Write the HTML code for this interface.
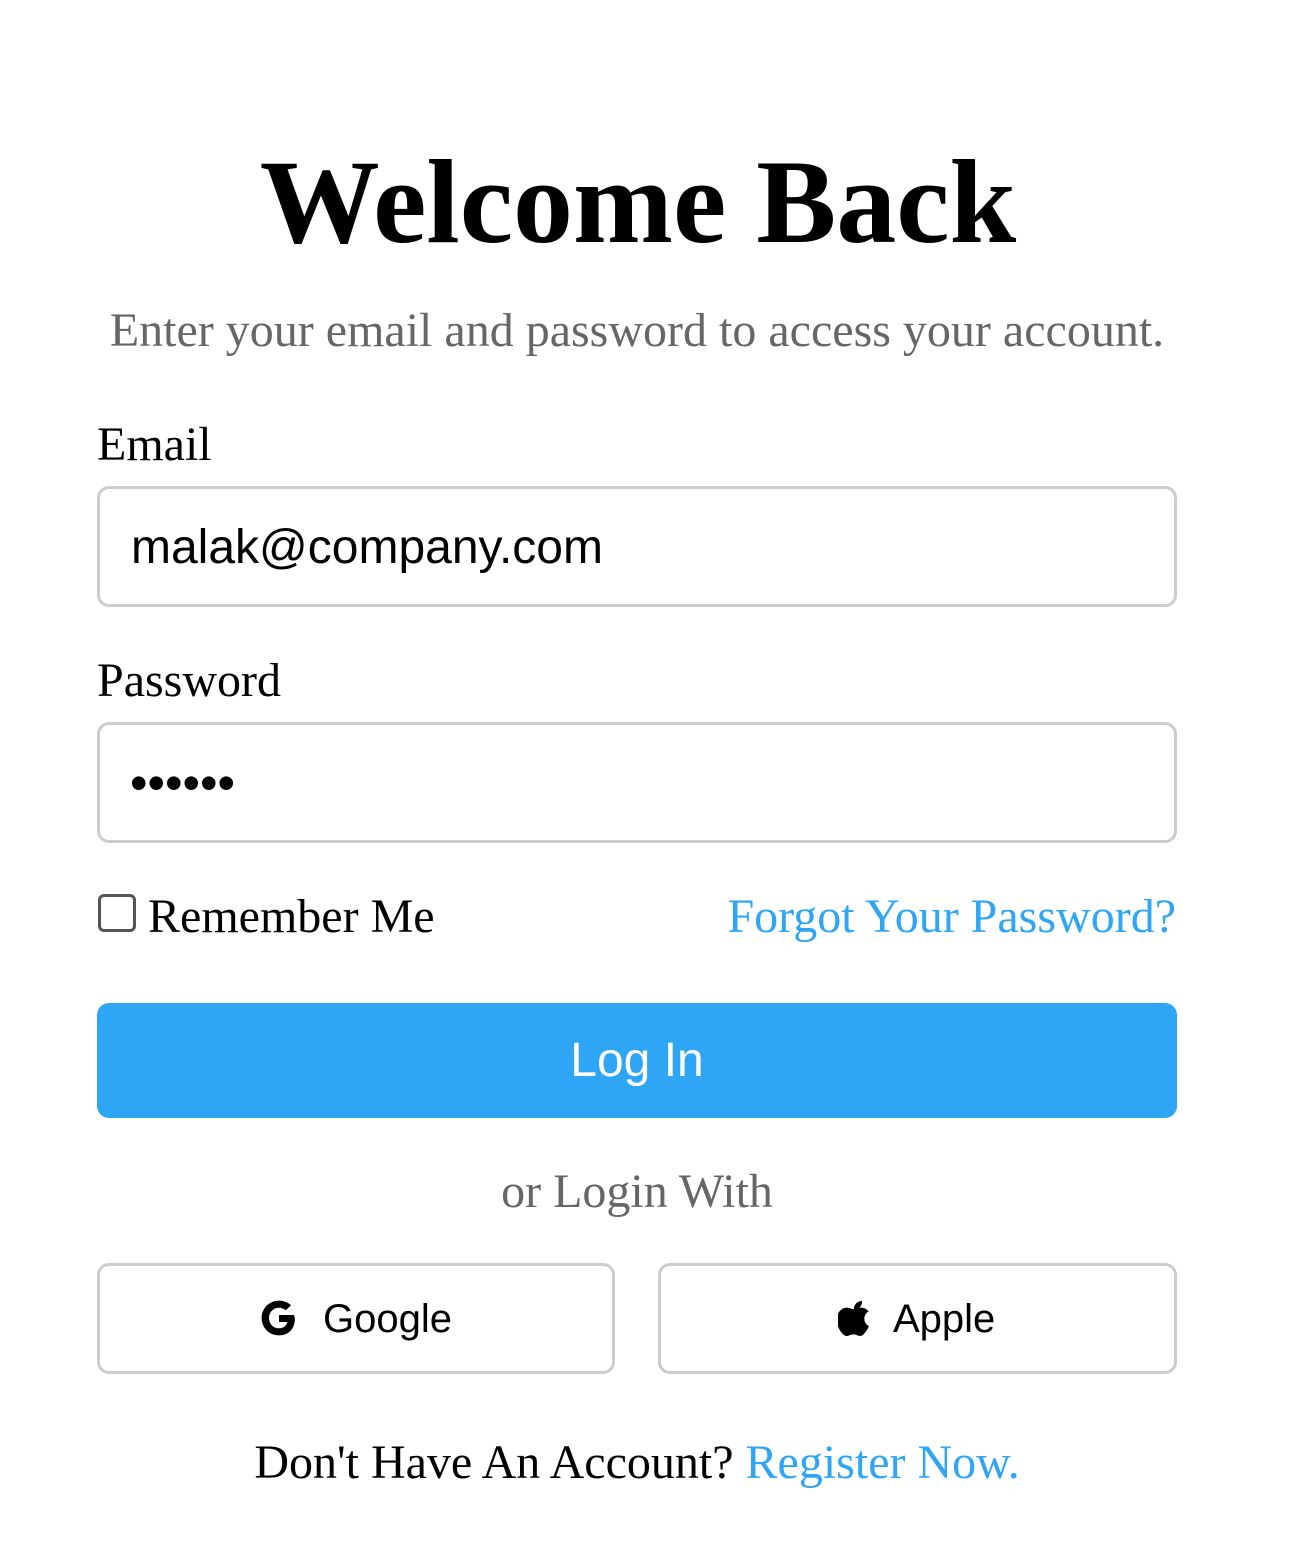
<!DOCTYPE html>
<html><head><style>
body{margin:0;width:1290px;height:1544px;background:#fff;position:relative;overflow:hidden;font-family:"Liberation Serif",serif}
.a{position:absolute;white-space:nowrap;line-height:1}
.box{position:absolute;border:3px solid #ccc;border-radius:12px;box-sizing:border-box;background:#fff}
.sans{font-family:"Liberation Sans",sans-serif}
</style></head><body>
<div class="a" style="left:0;width:1276px;text-align:center;top:142px;font-size:120px;font-weight:bold">Welcome Back</div>
<div class="a" style="left:0;width:1274px;text-align:center;top:307px;font-size:48px;color:#666">Enter your email and password to access your account.</div>
<div class="a" style="left:97px;top:421px;font-size:48px">Email</div>
<div class="box" style="left:97px;top:486px;width:1080px;height:121px"></div>
<div class="a sans" style="left:131px;top:524px;font-size:48px">malak@company.com</div>
<div class="a" style="left:97px;top:657px;font-size:48px">Password</div>
<div class="box" style="left:97px;top:722px;width:1080px;height:121px"></div>
<div class="a sans" style="left:130px;top:758px;font-size:50px">••••••</div>
<div style="position:absolute;left:98px;top:894px;width:38px;height:38px;border:3px solid #555;border-radius:6px;box-sizing:border-box"></div>
<div class="a" style="left:148px;top:893px;font-size:48px">Remember Me</div>
<div class="a" style="right:114px;top:893px;font-size:48px;color:#2ea5f5">Forgot Your Password?</div>
<div style="position:absolute;left:97px;top:1003px;width:1080px;height:115px;background:#2ea5f5;border-radius:12px"></div>
<div class="a sans" style="left:97px;width:1080px;text-align:center;top:1037px;font-size:48px;color:#fff">Log In</div>
<div class="a" style="left:0;width:1274px;text-align:center;top:1168px;font-size:48px;color:#666">or Login With</div>
<div class="box" style="left:97px;top:1263px;width:518px;height:111px"></div>
<div class="box" style="left:658px;top:1263px;width:519px;height:111px"></div>
<svg style="position:absolute;left:259px;top:1298px" width="40" height="40" viewBox="0 0 40 40"><path d="M35 17H20v7h8.5c-1.2 4-4.5 6.3-8.5 6.3-5.7 0-10-4.5-10-10.3S14.3 9.7 20 9.7c2.7 0 5 1 6.8 2.6l5.2-5.1C28.9 4.3 24.7 2.6 20 2.6 10.3 2.6 2.6 10.3 2.6 20S10.3 37.4 20 37.4c9.2 0 15.8-6.5 15.8-16 0-1.5-.3-3-.8-4.4z" fill="#000"/></svg>
<div class="a sans" style="left:323px;top:1299px;font-size:40px">Google</div>
<svg style="position:absolute;left:838px;top:1299px" width="34" height="37" viewBox="0 0 34 37"><path d="M24 2c.3 2.5-.9 5-2.4 6.5-1.5 1.6-3.7 2.4-5.700 2.2-.3-2.4.9-4.9 2.3-6.3C19.7 2.8 22 1.9 24 2zM31 27c-.9 2-1.4 2.9-2.5 4.6-1.6 2.4-3.8 5.4-6.6 5.4-2.5 0-3.1-1.6-6.5-1.6s-4.1 1.600-6.6 1.6c-2.8 0-4.9-2.7-6.5-5.1C-1.9 25.4-2.3 17.5 1 13c1.9-2.7 5-4.4 7.9-4.4s4.8 1.6 7.3 1.6c2.4 0 3.8-1.6 7.3-1.6 2.6 0 5.3 1.4 7.2 3.8-6.4 3.5-5.3 12.5.3 14.6z" fill="#000"/></svg>
<div class="a sans" style="left:893px;top:1299px;font-size:40px">Apple</div>
<div class="a" style="left:0;width:1274px;text-align:center;top:1439px;font-size:48px">Don't Have An Account? <span style="color:#2ea5f5">Register Now.</span></div>
</body></html>
